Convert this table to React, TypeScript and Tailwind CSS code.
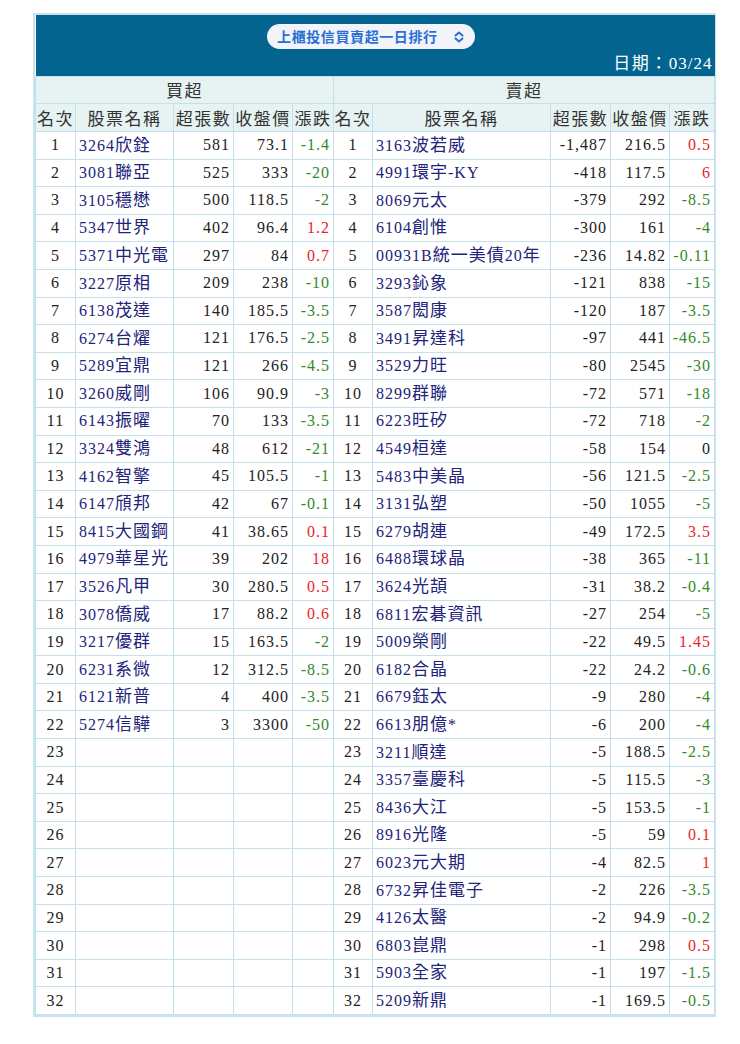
import React from 'react';

type Row = [string, string, string, string, string];

const buys: Row[] = [
  ['1', '3264欣銓', '581', '73.1', '-1.4'],
  ['2', '3081聯亞', '525', '333', '-20'],
  ['3', '3105穩懋', '500', '118.5', '-2'],
  ['4', '5347世界', '402', '96.4', '1.2'],
  ['5', '5371中光電', '297', '84', '0.7'],
  ['6', '3227原相', '209', '238', '-10'],
  ['7', '6138茂達', '140', '185.5', '-3.5'],
  ['8', '6274台燿', '121', '176.5', '-2.5'],
  ['9', '5289宜鼎', '121', '266', '-4.5'],
  ['10', '3260威剛', '106', '90.9', '-3'],
  ['11', '6143振曜', '70', '133', '-3.5'],
  ['12', '3324雙鴻', '48', '612', '-21'],
  ['13', '4162智擎', '45', '105.5', '-1'],
  ['14', '6147頎邦', '42', '67', '-0.1'],
  ['15', '8415大國鋼', '41', '38.65', '0.1'],
  ['16', '4979華星光', '39', '202', '18'],
  ['17', '3526凡甲', '30', '280.5', '0.5'],
  ['18', '3078僑威', '17', '88.2', '0.6'],
  ['19', '3217優群', '15', '163.5', '-2'],
  ['20', '6231系微', '12', '312.5', '-8.5'],
  ['21', '6121新普', '4', '400', '-3.5'],
  ['22', '5274信驊', '3', '3300', '-50'],
];

const sells: Row[] = [
  ['1', '3163波若威', '-1,487', '216.5', '0.5'],
  ['2', '4991環宇-KY', '-418', '117.5', '6'],
  ['3', '8069元太', '-379', '292', '-8.5'],
  ['4', '6104創惟', '-300', '161', '-4'],
  ['5', '00931B統一美債20年', '-236', '14.82', '-0.11'],
  ['6', '3293鈊象', '-121', '838', '-15'],
  ['7', '3587閎康', '-120', '187', '-3.5'],
  ['8', '3491昇達科', '-97', '441', '-46.5'],
  ['9', '3529力旺', '-80', '2545', '-30'],
  ['10', '8299群聯', '-72', '571', '-18'],
  ['11', '6223旺矽', '-72', '718', '-2'],
  ['12', '4549桓達', '-58', '154', '0'],
  ['13', '5483中美晶', '-56', '121.5', '-2.5'],
  ['14', '3131弘塑', '-50', '1055', '-5'],
  ['15', '6279胡連', '-49', '172.5', '3.5'],
  ['16', '6488環球晶', '-38', '365', '-11'],
  ['17', '3624光頡', '-31', '38.2', '-0.4'],
  ['18', '6811宏碁資訊', '-27', '254', '-5'],
  ['19', '5009榮剛', '-22', '49.5', '1.45'],
  ['20', '6182合晶', '-22', '24.2', '-0.6'],
  ['21', '6679鈺太', '-9', '280', '-4'],
  ['22', '6613朋億*', '-6', '200', '-4'],
  ['23', '3211順達', '-5', '188.5', '-2.5'],
  ['24', '3357臺慶科', '-5', '115.5', '-3'],
  ['25', '8436大江', '-5', '153.5', '-1'],
  ['26', '8916光隆', '-5', '59', '0.1'],
  ['27', '6023元大期', '-4', '82.5', '1'],
  ['28', '6732昇佳電子', '-2', '226', '-3.5'],
  ['29', '4126太醫', '-2', '94.9', '-0.2'],
  ['30', '6803崑鼎', '-1', '298', '0.5'],
  ['31', '5903全家', '-1', '197', '-1.5'],
  ['32', '5209新鼎', '-1', '169.5', '-0.5'],
];

const cell = 'border border-[#c4e0ea] h-[27.6px] p-0 align-middle';
const head = 'border border-[#c4e0ea] bg-[#e6f3f2] p-0 text-center font-normal text-[#333] text-[17px] tracking-[1.5px]';

const changeColor = (v: string) => {
  if (v.startsWith('-')) return 'text-[#2f8a2a]';
  if (v === '0' || v === '') return 'text-[#222]';
  return 'text-[#e8252a]';
};

// CJK runs a touch larger than the latin digits, like the original page
const StockName: React.FC<{ name: string }> = ({ name }) => (
  <>
    {name.split(/([\u4e00-\u9fff]+)/).map((part, i) =>
      /[\u4e00-\u9fff]/.test(part) ? (
        <span key={i} className="text-[17px]">{part}</span>
      ) : (
        <span key={i}>{part}</span>
      )
    )}
  </>
);

const Cells: React.FC<{ rank: string; row?: Row }> = ({ rank, row }) => (
  <>
    <td className={`${cell} text-center text-[#222]`}>{rank}</td>
    <td className={`${cell} pl-[3px] text-left text-[#22237a] whitespace-nowrap`}>{row ? <StockName name={row[1]} /> : ''}</td>
    <td className={`${cell} pr-[3px] text-right text-[#222]`}>{row ? row[2] : ''}</td>
    <td className={`${cell} pr-[3px] text-right text-[#222]`}>{row ? row[3] : ''}</td>
    <td className={`${cell} pr-[3px] text-right ${row ? changeColor(row[4]) : ''}`}>{row ? row[4] : ''}</td>
  </>
);

const App: React.FC = () => {
  return (
    <div className="min-h-[1044px] bg-white pl-[33px] pt-[13px] font-['Liberation_Serif','Noto_Sans_CJK_TC',serif] text-[16px] tracking-[1px]">
      <div className="w-[683px] border-2 border-[#c6e3ee]">
        <table className="w-full table-fixed border-collapse">
          <colgroup>
            <col className="w-[40px]" />
            <col className="w-[98px]" />
            <col className="w-[60px]" />
            <col className="w-[59px]" />
            <col className="w-[41px]" />
            <col className="w-[39px]" />
            <col className="w-[178px]" />
            <col className="w-[60px]" />
            <col className="w-[59px]" />
            <col className="w-[45px]" />
          </colgroup>
          <thead>
            <tr>
              <td colSpan={10} className="h-[61px] bg-[#03648f] p-0">
                <div className="flex h-[61px] flex-col">
                  <div className="flex justify-center pt-[9px] pr-[8px]">
                    <div className="flex h-[25px] w-[208px] items-center justify-between rounded-full bg-[#f2f4f9] pl-[10px] pr-[10px] font-['Noto_Sans_CJK_TC',sans-serif] text-[14px] font-bold tracking-[0.6px] text-[#2a6fd6]">
                      <span>上櫃投信買賣超一日排行</span>
                      <svg width="12" height="14" viewBox="0 0 12 14" fill="none" stroke="#2a6fd6" strokeWidth="2" strokeLinecap="round" strokeLinejoin="round">
                        <path d="M2.5 5.5 6 2.5 9.5 5.5" />
                        <path d="M2.5 8.5 6 11.5 9.5 8.5" />
                      </svg>
                    </div>
                  </div>
                  <div className="mt-auto pb-[3px] pr-[2px] text-right text-[17px] text-white">
                    <span className="font-['Noto_Sans_CJK_TC',sans-serif] tracking-[1.5px]">日期：</span>
                    <span>03/24</span>
                  </div>
                </div>
              </td>
            </tr>
            <tr className="font-['Noto_Sans_CJK_TC',sans-serif]">
              <th colSpan={5} className={`${head} h-[27px]`}>買超</th>
              <th colSpan={5} className={`${head} h-[27px]`}>賣超</th>
            </tr>
            <tr className="font-['Noto_Sans_CJK_TC',sans-serif]">
              {['名次', '股票名稱', '超張數', '收盤價', '漲跌', '名次', '股票名稱', '超張數', '收盤價', '漲跌'].map((h, i) => (
                <th key={i} className={`${head} h-[28px] whitespace-nowrap`}>{h}</th>
              ))}
            </tr>
          </thead>
          <tbody>
            {sells.map((s, i) => (
              <tr key={i}>
                <Cells rank={String(i + 1)} row={buys[i]} />
                <Cells rank={s[0]} row={s} />
              </tr>
            ))}
          </tbody>
        </table>
      </div>
    </div>
  );
};

export default App;
